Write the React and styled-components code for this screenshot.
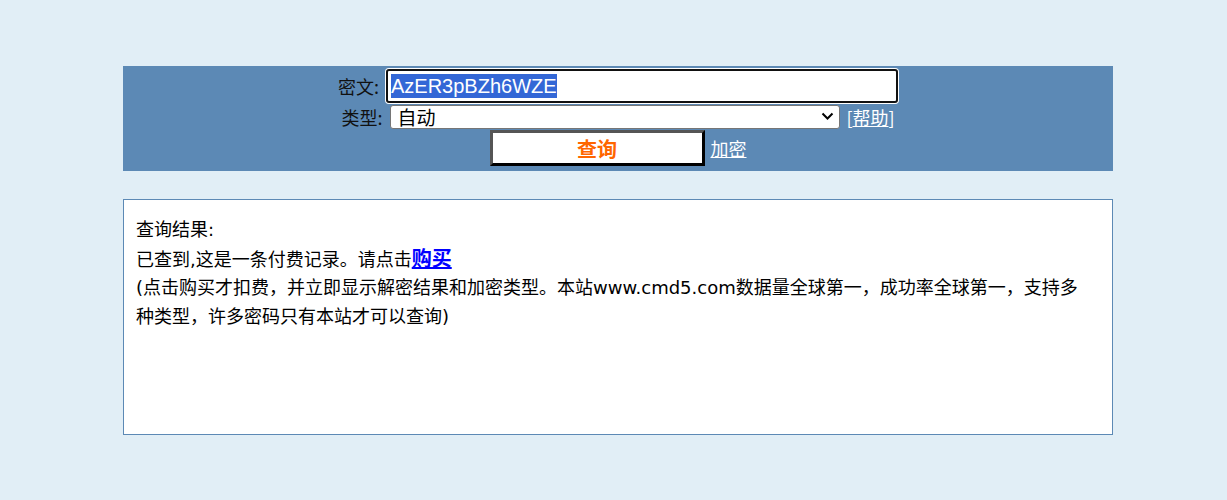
import React from 'react'
import styled, { createGlobalStyle } from 'styled-components'

const Global = createGlobalStyle`
  html, body {
    margin: 0;
    padding: 0;
    background: #e1eef6;
  }
  body {
    font-family: "DejaVu Sans", "Noto Sans CJK SC", sans-serif;
    color: #000;
  }
`

const Page = styled.div`
  padding: 66px 0 0 123px;
  min-height: 500px;
  box-sizing: border-box;
`

const SearchPanel = styled.form`
  width: 990px;
  height: 105px;
  box-sizing: border-box;
  background: #5c89b5;
  padding-top: 3px;
  display: flex;
  flex-direction: column;
  align-items: center;
`

const Row = styled.div`
  display: flex;
  align-items: center;
  justify-content: center;
  height: ${(p) => p.h}px;
  margin-bottom: ${(p) => p.mb || 0}px;
`

const Label = styled.span`
  font-family: "Noto Sans CJK SC", sans-serif;
  font-size: 18px;
  margin-right: ${(p) => p.mr}px;
  color: #111;
`

const FakeInput = styled.div`
  width: 512px;
  height: 34px;
  box-sizing: border-box;
  background: #fff;
  border: 2px solid #111;
  border-radius: 3px;
  box-shadow: 0 0 0 1px #fff;
  display: flex;
  align-items: center;
  padding-left: 3px;
  font-family: "Liberation Sans", Arial, sans-serif;
  font-size: 20px;
`

const Selected = styled.span`
  background: #3367d6;
  color: #fff;
  line-height: 24px;
`

const SelectWrap = styled.div`
  position: relative;
  width: 450px;
  height: 24px;
  margin-left: 8px;
`

const Select = styled.select`
  appearance: none;
  width: 100%;
  height: 100%;
  box-sizing: border-box;
  border: 1px solid #767676;
  border-radius: 3px;
  background: #fff;
  padding: 0 0 0 6px;
  font-family: "Noto Sans CJK SC", sans-serif;
  font-size: 19px;
  color: #000;
  line-height: 22px;
`

const Chevron = styled.svg`
  position: absolute;
  right: 6px;
  top: 7px;
  pointer-events: none;
`

const WhiteLink = styled.a`
  color: #fff;
  font-family: "Noto Sans CJK SC", sans-serif;
  font-size: 18px;
  text-decoration: underline;
  margin-left: ${(p) => (p.$tight ? 0 : 6)}px;
`

const Bracket = styled.span`
  color: #fff;
  font-family: "Noto Sans CJK SC", sans-serif;
  font-size: 18px;
  margin-left: ${(p) => p.ml || 0}px;
`

const QueryButton = styled.button`
  width: 215px;
  height: 36px;
  box-sizing: border-box;
  background: #fff;
  border: 3px solid;
  border-color: #555 #000 #000 #555;
  color: #ff6600;
  font-family: "Noto Sans CJK SC", sans-serif;
  font-weight: bold;
  font-size: 20px;
  padding: 0;
  cursor: pointer;
`

const ResultBox = styled.div`
  width: 990px;
  height: 236px;
  box-sizing: border-box;
  margin-top: 28px;
  background: #fff;
  border: 1px solid #5c89b5;
  padding: 16px 30px 16px 12px;
  font-size: 18px;
  line-height: 28.7px;
`

const Line = styled.div``

const BuyLink = styled.a`
  color: #0000ff;
  font-weight: bold;
  font-size: 20px;
  text-decoration: underline;
`

export default function App() {
  return (
    <>
      <Global />
      <Page>
        <SearchPanel onSubmit={(e) => e.preventDefault()}>
          <Row h={34} mb={1}>
            <Label mr={7}>密文:</Label>
            <FakeInput>
              <Selected>AzER3pBZh6WZE</Selected>
            </FakeInput>
          </Row>
          <Row h={25} mb={1}>
            <Label mr={0}>类型:</Label>
            <SelectWrap>
              <Select defaultValue="auto">
                <option value="auto">自动</option>
              </Select>
              <Chevron width="13" height="9" viewBox="0 0 13 9">
                <path d="M1.5 1.5 L6.5 6.5 L11.5 1.5" fill="none" stroke="#000" strokeWidth="2" />
              </Chevron>
            </SelectWrap>
            <Bracket ml={6}>[</Bracket>
            <WhiteLink href="#" $tight>帮助</WhiteLink>
            <Bracket>]</Bracket>
          </Row>
          <Row h={36}>
            <QueryButton type="submit">查询</QueryButton>
            <WhiteLink href="#">加密</WhiteLink>
          </Row>
        </SearchPanel>
        <ResultBox>
          <Line>查询结果:</Line>
          <Line>
            已查到,这是一条付费记录。请点击<BuyLink href="#">购买</BuyLink>
          </Line>
          <Line>
            (点击购买才扣费，并立即显示解密结果和加密类型。本站www.cmd5.com数据量全球第一，成功率全球第一，支持多种类型，许多密码只有本站才可以查询)
          </Line>
        </ResultBox>
      </Page>
    </>
  )
}
